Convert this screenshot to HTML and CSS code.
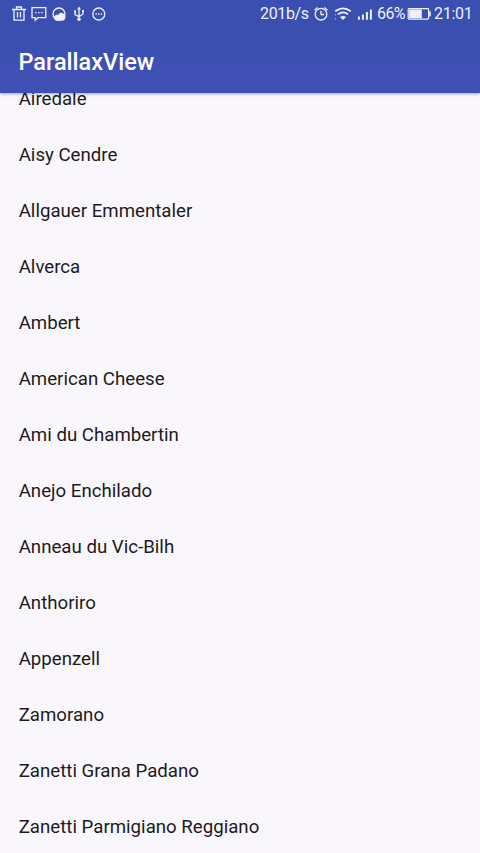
FILE: index.html
```html
<!DOCTYPE html>
<html lang="en">
<head>
<meta charset="utf-8">
<title>ParallaxView</title>
<link rel="stylesheet" href="styles.css">
</head>
<body>
<div class="screen">
  <header class="app-bar">
    <div class="status">
      <svg class="notifications" width="120" height="28" viewBox="0 0 120 28" fill="none" stroke="currentColor" stroke-width="1.3">
        <path d="M12 9.5h14M16.5 9V7h5v2M14 9.5v10.7h10V9.5M17.5 12v5.5M20.5 12v5.5"/>
        <path d="M32 7.7h13.8v10H38l-2.8 2.6v-2.6H32z"/>
        <path d="M35.2 12.6h1.4M38.2 12.6h1.4M41.2 12.6h1.4"/>
        <circle cx="59" cy="14" r="6"/>
        <path d="M56.2 20.8a3.1 3.1 0 0 1-.5-5.8c.9-.4 1.7-.2 2.3.2.8-2.9 4.9-3.6 6.3-.6 2 1.8 1.2 6.2-2 6.2z" fill="currentColor" stroke="none"/>
        <path d="M79 9v10M75 12v2.5l4 2.3 4-2.8v-2.5"/>
        <path d="M79 6.5l2 3h-4zM74 10.5h2v2.2h-2zM82 10h2v2.2h-2z" fill="currentColor" stroke="none"/>
        <circle cx="79" cy="19.2" r="1.7" fill="currentColor" stroke="none"/>
        <circle cx="98.8" cy="14" r="6"/>
        <path d="M95.5 14h1.4M98.1 14h1.4M100.7 14h1.4"/>
      </svg>
      <span class="speed">201b/s</span>
      <svg class="signals" width="64" height="28" viewBox="312 0 64 28" fill="none" stroke="currentColor" stroke-width="1.3">
        <circle cx="321" cy="14.2" r="5.8"/>
        <path d="M321 10.8v3.7h3M314.5 10.2l3.2-2.8M324.3 7.4l3.2 2.8"/>
        <path d="M335.3 11.2q7.7-5.5 15.4 0M338 14.2q5-3.6 10 0" stroke-width="1.8"/>
        <path d="M343 20l-3-3q3-2 6 0z" fill="currentColor" stroke="none"/>
        <path d="M335.5 14v1.5M335.5 18v1.5" opacity=".5"/>
        <path d="M358.9 16.5v3.3M362.9 14.5v5.3M366.9 12v7.8M370.9 9.5v10.3" stroke-width="2"/>
      </svg>
      <span class="percent">66%</span>
      <svg class="battery" width="25" height="28" viewBox="407 0 25 28">
        <rect x="408.2" y="8.7" width="20.4" height="10.4" rx=".8" fill="none" stroke="currentColor" stroke-width="1.2"/>
        <path d="M409.2 9.6h12.6v8.6h-12.6zM429.2 11.5h1.6v4.8h-1.6z" fill="currentColor"/>
      </svg>
      <time class="clock">21:01</time>
    </div>
    <h1 class="title">ParallaxView</h1>
  </header>
  <ul class="list">
    <li>Airedale</li>
    <li>Aisy Cendre</li>
    <li>Allgauer Emmentaler</li>
    <li>Alverca</li>
    <li>Ambert</li>
    <li>American Cheese</li>
    <li>Ami du Chambertin</li>
    <li>Anejo Enchilado</li>
    <li>Anneau du Vic-Bilh</li>
    <li>Anthoriro</li>
    <li>Appenzell</li>
    <li>Zamorano</li>
    <li>Zanetti Grana Padano</li>
    <li>Zanetti Parmigiano Reggiano</li>
  </ul>
</div>
</body>
</html>
```
FILE: styles.css
```css
body {
  margin: 0;
  font-family: Roboto, sans-serif;
}

.screen {
  height: 853px;
  overflow: hidden;
  display: flex;
  flex-direction: column;
  background: #f9f7fb;
}

.app-bar {
  position: relative;
  z-index: 1;
  flex: none;
  height: 93px;
  background: linear-gradient(#3a4fb1, #3a50b0 55%, #404fb3 68%);
  box-shadow: 0 1px 3px rgba(0, 0, 0, 0.35);
  color: #fff;
}

.status {
  display: flex;
  height: 28px;
  line-height: 28px;
  font-size: 16px;
  color: #eef0fc;
  white-space: nowrap;
}

.status svg {
  flex: none;
}

.speed {
  width: 52px;
  margin-left: 140px;
  letter-spacing: -0.35px;
}

.percent {
  width: 30px;
  margin-left: 1px;
  letter-spacing: -0.6px;
}

.clock {
  margin-left: 2px;
  letter-spacing: -0.3px;
}

.title {
  margin: 0;
  padding-left: 18.5px;
  font-size: 23.5px;
  font-weight: 500;
  line-height: 69px;
}

.list {
  flex: none;
  margin: -22px 0 0;
  padding: 0;
  list-style: none;
}

.list li {
  height: 56px;
  padding-left: 18.7px;
  font-size: 18.66px;
  line-height: 56px;
  color: #1c1b1e;
}
```
